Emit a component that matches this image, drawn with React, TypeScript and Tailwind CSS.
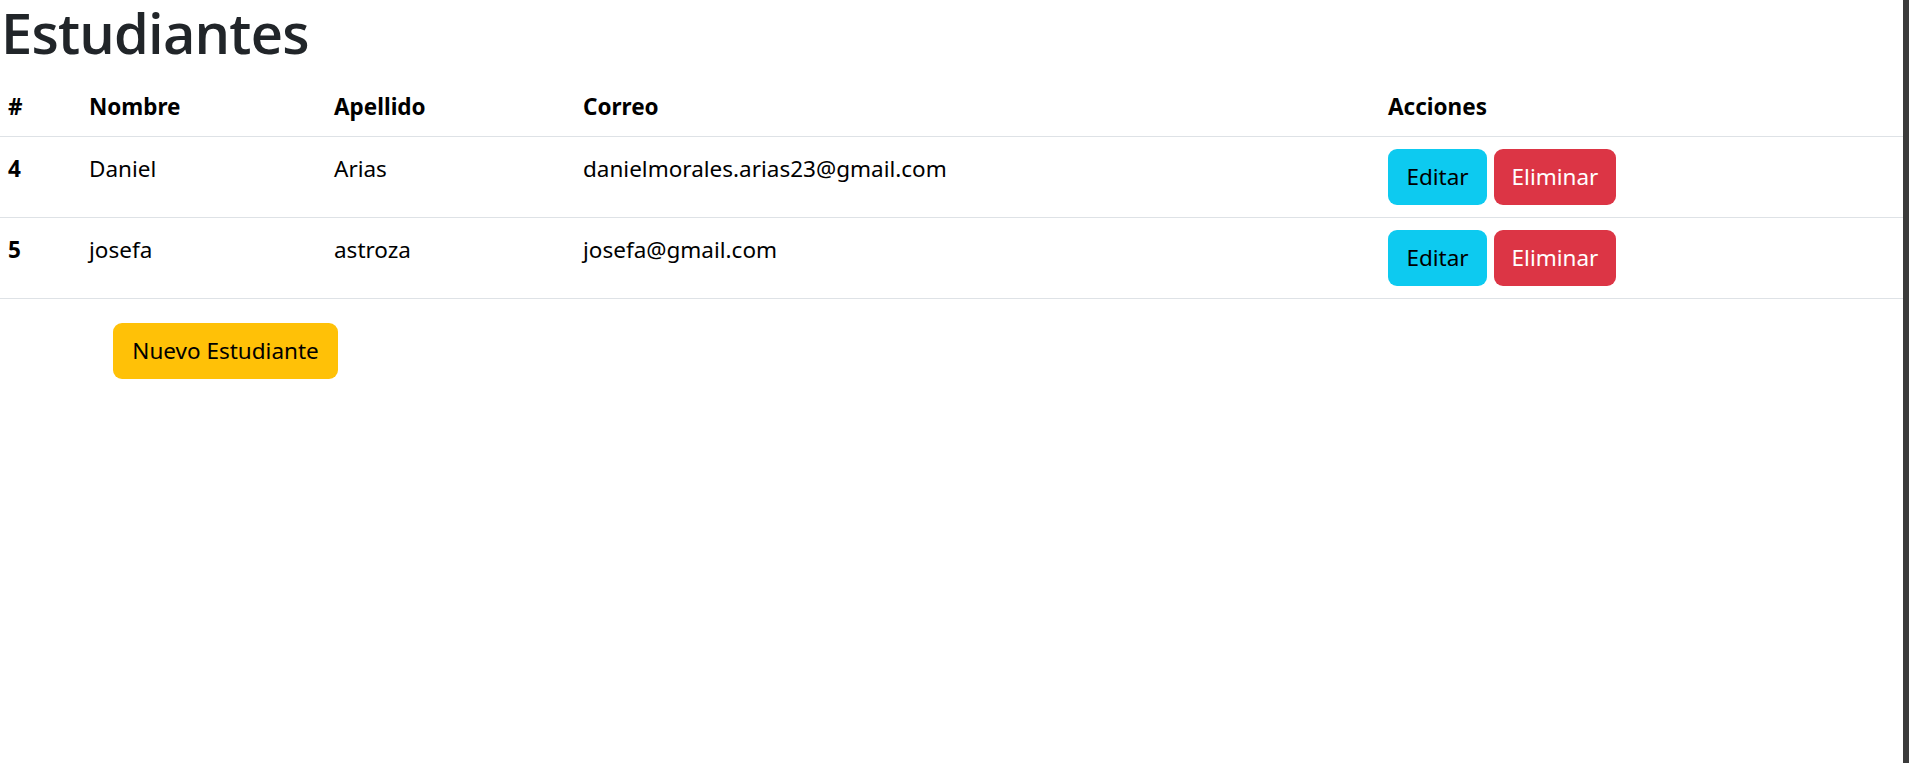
const students = [
  { id: 4, nombre: "Daniel", apellido: "Arias", correo: "danielmorales.arias23@gmail.com" },
  { id: 5, nombre: "josefa", apellido: "astroza", correo: "josefa@gmail.com" },
];

export default function App() {
  return (
    <div className="flex h-[763px] w-full overflow-hidden bg-white font-['Noto_Sans','Open_Sans',sans-serif]">
      <main className="flex-1 min-w-0">
        <h1 className="pl-px pt-px text-[56px] leading-[62px] mb-[13px] font-semibold text-[#212529] tracking-[-0.8px] font-['Open_Sans','Noto_Sans',sans-serif]">
          Estudiantes
        </h1>

        <table className="w-full table-fixed border-collapse text-[22.5px] text-black">
          <thead>
            <tr className="border-b border-[#dee2e6]">
              <th className="w-[77px] pl-2 pr-3 pt-[13px] pb-[11px] text-left font-bold leading-9">#</th>
              <th className="w-[245px] px-3 pt-[13px] pb-[11px] text-left font-bold leading-9">Nombre</th>
              <th className="w-[249px] px-3 pt-[13px] pb-[11px] text-left font-bold leading-9">Apellido</th>
              <th className="w-[805px] px-3 pt-[13px] pb-[11px] text-left font-bold leading-9">Correo</th>
              <th className="px-3 pt-[13px] pb-[11px] text-left font-bold leading-9">Acciones</th>
            </tr>
          </thead>
          <tbody>
            {students.map((s) => (
              <tr key={s.id} className="border-b border-[#dee2e6]">
                <td className="pl-2 pr-3 pt-[14px] align-top font-bold leading-9">{s.id}</td>
                <td className="px-3 pt-[14px] align-top leading-9">{s.nombre}</td>
                <td className="px-3 pt-[14px] align-top leading-9">{s.apellido}</td>
                <td className="px-3 pt-[14px] align-top leading-9">{s.correo}</td>
                <td className="px-3 py-3 align-top">
                  <div className="flex gap-[7px]">
                    <button className="h-[56px] w-[99px] rounded-[9px] bg-[#0dcaf0] text-[22.5px] leading-9 text-black">
                      Editar
                    </button>
                    <button className="h-[56px] w-[122px] rounded-[9px] bg-[#dc3545] text-[22.5px] leading-9 text-white">
                      Eliminar
                    </button>
                  </div>
                </td>
              </tr>
            ))}
          </tbody>
        </table>

        <div className="mt-6 pl-[113px]">
          <button className="h-[56px] w-[225px] rounded-[9px] bg-[#ffc107] text-[22.5px] leading-9 text-black">
            Nuevo Estudiante
          </button>
        </div>
      </main>
      <div className="w-[6px] shrink-0 bg-[#3b3b3b]" />
    </div>
  );
}
